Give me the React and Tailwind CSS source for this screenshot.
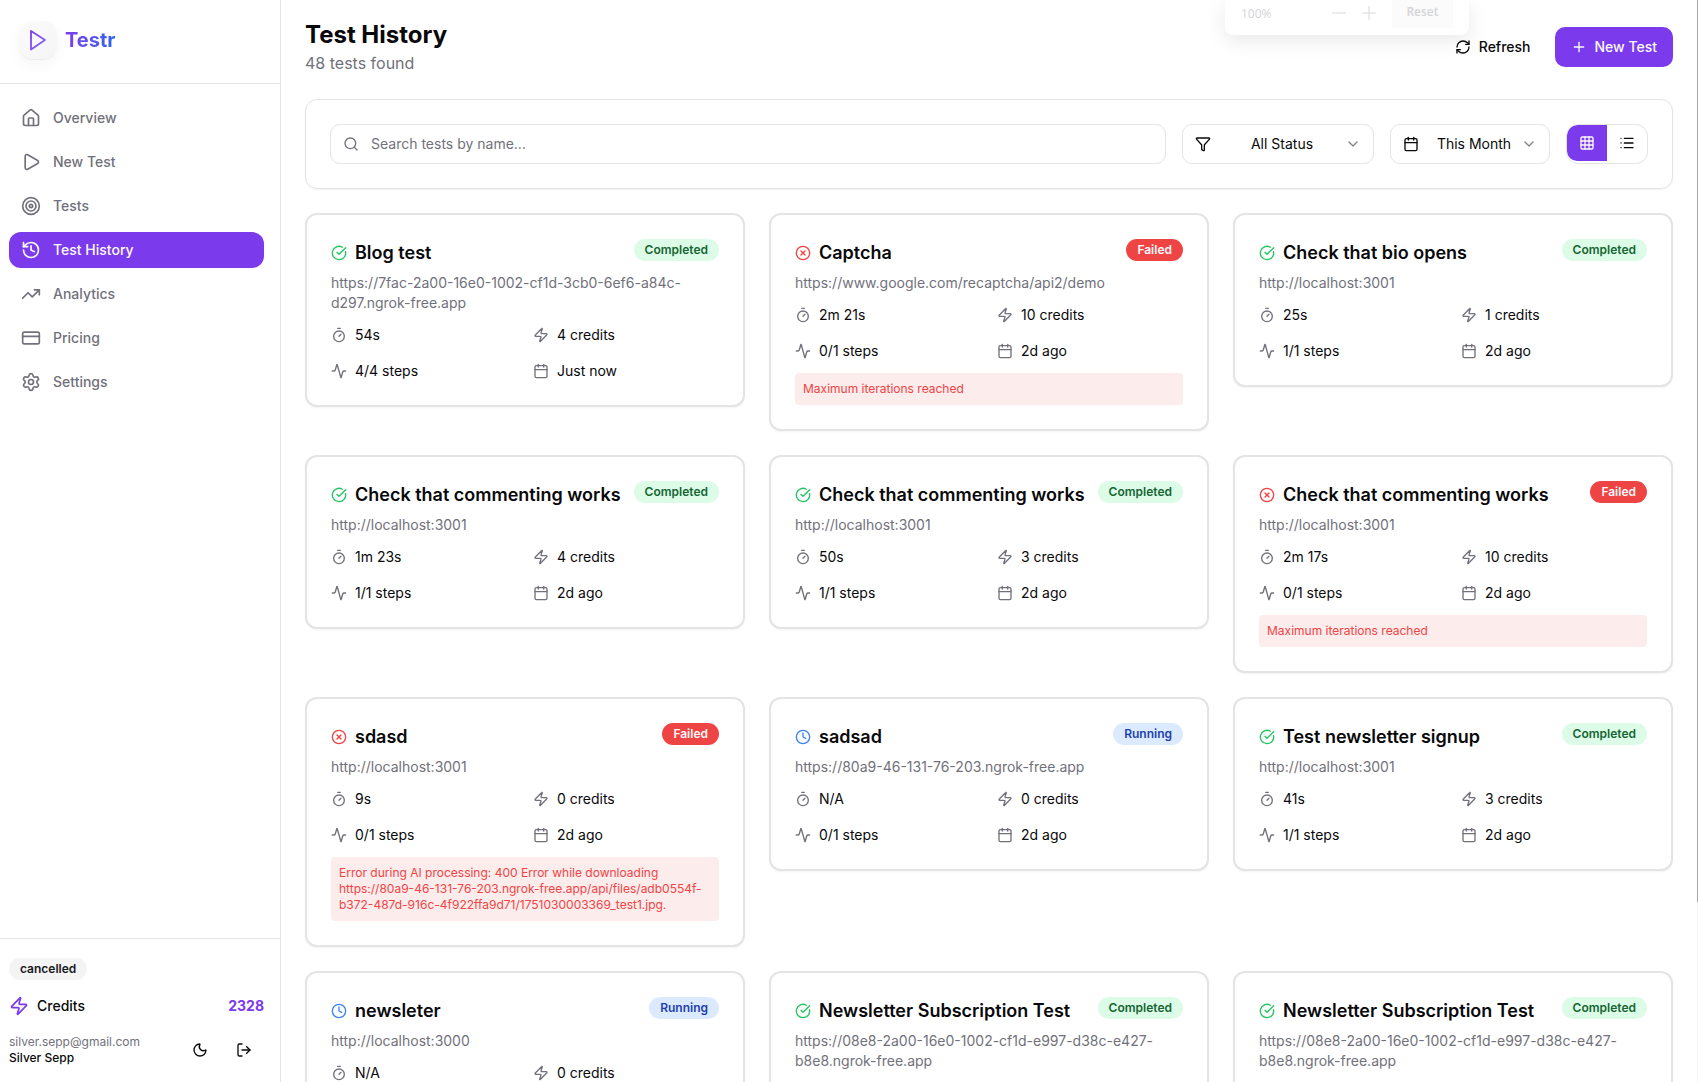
import React, { useState } from "react";
import {
  House, Play, Target, History, TrendingUp, CreditCard, Settings, Zap, Moon, LogOut,
  RefreshCw, Plus, Minus, Search, Funnel, Calendar, ChevronDown, Grid3x3, List,
  CircleCheckBig, CircleX, Clock, Timer, Activity,
} from "lucide-react";

const navItems = [
  { label: "Overview", icon: House },
  { label: "New Test", icon: Play },
  { label: "Tests", icon: Target },
  { label: "Test History", icon: History, active: true },
  { label: "Analytics", icon: TrendingUp },
  { label: "Pricing", icon: CreditCard },
  { label: "Settings", icon: Settings },
];

const statuses = {
  Completed: { icon: CircleCheckBig, color: "text-[#22c55e]", badge: "bg-[#dcfce7] text-[#166534]" },
  Failed: { icon: CircleX, color: "text-[#ef4444]", badge: "bg-[#ef4444] text-[#fafafa]" },
  Running: { icon: Clock, color: "text-[#3b82f6]", badge: "bg-[#dbeafe] text-[#1e40af]" },
};

const LOCAL = "http://localhost:3001";
const NGROK = "https://08e8-2a00-16e0-1002-cf1d-e997-d38c-e427-b8e8.ngrok-free.app";

const tests = [
  { name: "Blog test", status: "Completed", url: "https://7fac-2a00-16e0-1002-cf1d-3cb0-6ef6-a84c-d297.ngrok-free.app", time: "54s", credits: "4 credits", steps: "4/4 steps", date: "Just now" },
  { name: "Captcha", status: "Failed", url: "https://www.google.com/recaptcha/api2/demo", time: "2m 21s", credits: "10 credits", steps: "0/1 steps", date: "2d ago", error: "Maximum iterations reached" },
  { name: "Check that bio opens", status: "Completed", url: LOCAL, time: "25s", credits: "1 credits", steps: "1/1 steps", date: "2d ago" },
  { name: "Check that commenting works", status: "Completed", url: LOCAL, time: "1m 23s", credits: "4 credits", steps: "1/1 steps", date: "2d ago" },
  { name: "Check that commenting works", status: "Completed", url: LOCAL, time: "50s", credits: "3 credits", steps: "1/1 steps", date: "2d ago" },
  { name: "Check that commenting works", status: "Failed", url: LOCAL, time: "2m 17s", credits: "10 credits", steps: "0/1 steps", date: "2d ago", error: "Maximum iterations reached" },
  { name: "sdasd", status: "Failed", url: LOCAL, time: "9s", credits: "0 credits", steps: "0/1 steps", date: "2d ago", error: "Error during AI processing: 400 Error while downloading https://80a9-46-131-76-203.ngrok-free.app/api/files/adb0554f-b372-487d-916c-4f922ffa9d71/1751030003369_test1.jpg." },
  { name: "sadsad", status: "Running", url: "https://80a9-46-131-76-203.ngrok-free.app", time: "N/A", credits: "0 credits", steps: "0/1 steps", date: "2d ago" },
  { name: "Test newsletter signup", status: "Completed", url: LOCAL, time: "41s", credits: "3 credits", steps: "1/1 steps", date: "2d ago" },
  { name: "newsleter", status: "Running", url: "http://localhost:3000", time: "N/A", credits: "0 credits", steps: "0/1 steps", date: "2d ago" },
  { name: "Newsletter Subscription Test", status: "Completed", url: NGROK, time: "1m 12s", credits: "5 credits", steps: "1/1 steps", date: "2d ago" },
  { name: "Newsletter Subscription Test", status: "Completed", url: NGROK, time: "58s", credits: "4 credits", steps: "1/1 steps", date: "2d ago" },
];

function Badge({ className, children }) {
  return (
    <span className={`inline-flex shrink-0 items-center rounded-full border border-transparent px-2.5 py-0.5 text-xs font-semibold ${className}`}>
      {children}
    </span>
  );
}

function Stat({ icon: Icon, children }) {
  return (
    <div className="flex items-center gap-2">
      <Icon className="size-4 text-zinc-500" />
      <span>{children}</span>
    </div>
  );
}

function TestCard({ test }) {
  const status = statuses[test.status];
  const StatusIcon = status.icon;
  return (
    <article className="rounded-xl border-2 border-[#e4e4e4] bg-white p-6 shadow-xs">
      <div className="flex items-start justify-between">
        <div className="flex items-center gap-2">
          <StatusIcon className={`size-4 shrink-0 ${status.color}`} />
          <h2 className="text-lg font-semibold">{test.name}</h2>
        </div>
        <Badge className={status.badge}>{test.status}</Badge>
      </div>
      <p className="mt-1.5 text-sm text-zinc-500">{test.url}</p>
      <div className="mt-3 grid grid-cols-2 gap-4 text-sm">
        <Stat icon={Timer}>{test.time}</Stat>
        <Stat icon={Zap}>{test.credits}</Stat>
        <Stat icon={Activity}>{test.steps}</Stat>
        <Stat icon={Calendar}>{test.date}</Stat>
      </div>
      {test.error && (
        <p className="mt-3 rounded-sm bg-[#ef4444]/10 p-2 text-xs text-[#ef4444]">{test.error}</p>
      )}
    </article>
  );
}

function Picker({ icon: Icon, label, options, className }) {
  return (
    <label className={`flex h-10 items-center rounded-[10px] border border-[#e4e4e4] px-3 ${className}`}>
      <Icon className="mr-2 size-4 shrink-0" />
      <select
        aria-label={label}
        className="min-w-0 flex-1 appearance-none bg-transparent text-center text-sm outline-none [text-align-last:center]"
      >
        {options.map((o) => (
          <option key={o}>{o}</option>
        ))}
      </select>
      <ChevronDown className="size-4 shrink-0 opacity-50" />
    </label>
  );
}

function Logo() {
  return (
    <div className="flex size-[38px] items-center justify-center rounded-[14px] bg-linear-to-br from-[#fbfbfc] to-[#f5f5f7] shadow-[0_6px_14px_rgba(0,0,0,0.04),0_1px_1px_rgba(0,0,0,0.05)]">
      <svg viewBox="0 0 24 24" className="size-6" fill="none" strokeWidth="1.8" strokeLinejoin="round">
        <defs>
          <linearGradient id="logo-stroke" x1="0" y1="0" x2="1" y2="1">
            <stop offset="0" stopColor="#7c3aed" />
            <stop offset="1" stopColor="#8b6cf6" />
          </linearGradient>
        </defs>
        <path d="M5 3 L19 12 L5 21.5 Z" stroke="url(#logo-stroke)" />
      </svg>
    </div>
  );
}

function Sidebar() {
  return (
    <aside className="flex w-[281px] shrink-0 flex-col border-r border-[#e4e4e4]">
      <div className="flex h-[84px] items-center gap-2 border-b border-[#e4e4e4] pb-1 pl-[19px]">
        <Logo />
        <span className="bg-linear-to-r from-[#7c3aed] to-[#2563eb] bg-clip-text text-xl font-bold text-transparent">Testr</span>
      </div>
      <nav className="flex flex-1 flex-col gap-2 py-4 pr-4 pl-[9px]">
        {navItems.map(({ label, icon: Icon, active }) => (
          <a
            key={label}
            href="#"
            aria-current={active ? "page" : undefined}
            className={`flex items-center gap-3 rounded-xl px-3 py-2 text-sm font-medium ${active ? "bg-[#7c3aed] text-[#fafafa]" : "text-zinc-500"}`}
          >
            <Icon className="size-5" />
            {label}
          </a>
        ))}
      </nav>
      <div className="border-t border-[#e4e4e4] pt-[19px] pr-4 pb-3 pl-[9px]">
        <div className="flex">
          <Badge className="bg-zinc-100 text-zinc-900">cancelled</Badge>
        </div>
        <div className="mt-3.5 flex h-6 items-center justify-between text-sm">
          <span className="flex items-center gap-2 font-medium">
            <Zap className="size-5 text-[#7c3aed]" />
            Credits
          </span>
          <span className="font-bold text-[#7c3aed]">2328</span>
        </div>
        <div className="mt-3 flex items-center justify-between">
          <div className="text-xs">
            <p className="text-zinc-500">silver.sepp@gmail.com</p>
            <p className="font-medium">Silver Sepp</p>
          </div>
          <div className="flex gap-1">
            <button aria-label="Toggle theme" className="flex size-10 items-center justify-center">
              <Moon className="size-4" />
            </button>
            <button aria-label="Log out" className="flex size-10 items-center justify-center">
              <LogOut className="size-4" />
            </button>
          </div>
        </div>
      </div>
    </aside>
  );
}

function ZoomPopup() {
  return (
    <div className="absolute top-0 right-[229px] flex h-[35px] w-[244px] items-start rounded-b-lg bg-white px-4 text-xs text-zinc-300 shadow-[0_6px_20px_rgba(0,0,0,0.09)]">
      <span className="flex-1 pt-1.5 font-['Open_Sans',sans-serif]">100%</span>
      <button aria-label="Zoom out" className="pt-0.5">
        <Minus className="size-[22px]" strokeWidth={1} />
      </button>
      <button aria-label="Zoom in" className="ml-2 pt-0.5">
        <Plus className="size-[22px]" strokeWidth={1} />
      </button>
      <button className="ml-3 h-7 w-[61px] bg-[#fbfbfb] pb-1 font-['Open_Sans',sans-serif] font-semibold">Reset</button>
    </div>
  );
}

export default function App() {
  const [view, setView] = useState("grid");
  return (
    <div className="relative flex h-screen overflow-hidden bg-white font-['Inter',sans-serif] text-zinc-950">
      <Sidebar />
      <main className="min-w-0 flex-1 overflow-hidden px-6 pt-[19px]">
        <header className="flex items-center justify-between">
          <div>
            <h1 className="text-2xl font-bold">Test History</h1>
            <p className="text-zinc-500">48 tests found</p>
          </div>
          <div className="flex items-center gap-2 text-sm font-medium">
            <button className="flex h-10 items-center gap-2 px-4">
              <RefreshCw className="size-4" />
              Refresh
            </button>
            <button className="flex h-10 items-center gap-2 rounded-[10px] bg-[#7c3aed] px-4 text-[#fafafa]">
              <Plus className="size-4" />
              New Test
            </button>
          </div>
        </header>

        <section className="mt-6 flex gap-4 rounded-xl border border-[#e4e4e4] p-6 shadow-xs">
          <label className="flex h-10 flex-1 items-center gap-3 rounded-[10px] border border-[#e4e4e4] px-3">
            <Search className="size-4 text-zinc-500" />
            <input
              type="text"
              aria-label="Search tests"
              placeholder="Search tests by name..."
              className="min-w-0 flex-1 bg-transparent text-sm outline-none placeholder:text-zinc-500"
            />
          </label>
          <Picker icon={Funnel} label="Status" options={["All Status", "Completed", "Failed", "Running"]} className="w-48" />
          <Picker icon={Calendar} label="Period" options={["This Month", "This Week", "Today"]} className="w-40" />
          <div className="flex h-10 items-start overflow-hidden rounded-xl border border-[#e4e4e4]">
            <button
              aria-label="Grid view"
              onClick={() => setView("grid")}
              className={`flex h-9 w-10 items-center justify-center ${view === "grid" ? "rounded-l-[10px] bg-[#7c3aed] text-[#fafafa]" : ""}`}
            >
              <Grid3x3 className="size-4" />
            </button>
            <button
              aria-label="List view"
              onClick={() => setView("list")}
              className={`flex h-9 w-10 items-center justify-center ${view === "list" ? "rounded-r-[10px] bg-[#7c3aed] text-[#fafafa]" : ""}`}
            >
              <List className="size-4" />
            </button>
          </div>
        </section>

        <section className="mt-6 grid grid-cols-3 items-start gap-6">
          {tests.map((test, i) => (
            <TestCard key={i} test={test} />
          ))}
        </section>
      </main>
      <div className="flex w-px shrink-0 flex-col bg-zinc-100">
        <div className="h-5/6 bg-[#a8a8a8]" />
      </div>
      <ZoomPopup />
    </div>
  );
}
